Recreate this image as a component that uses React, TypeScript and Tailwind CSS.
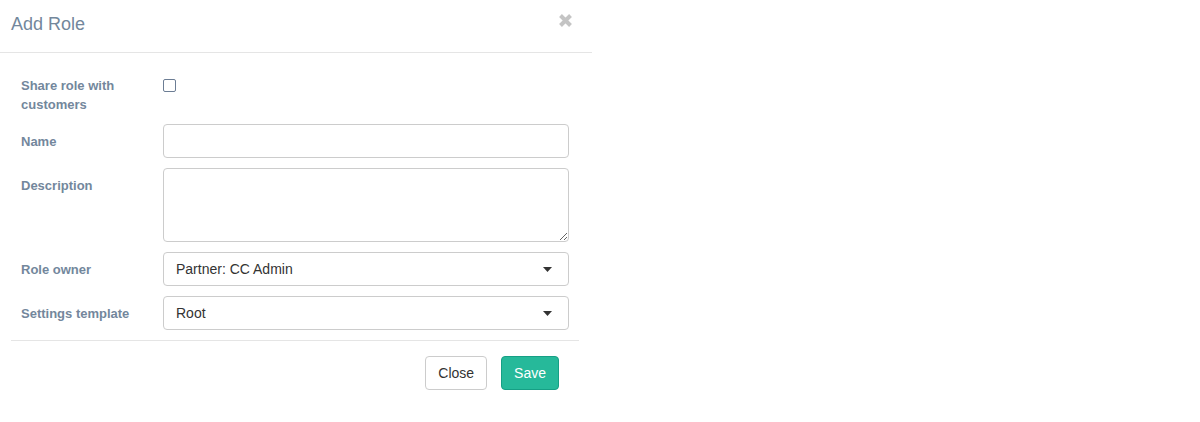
import React from "react";

const labelCls = "w-[152px] shrink-0 pl-[10px] pr-[10px] text-[13px] font-bold leading-[19px] text-[#73879C]";
const inputCls = "w-[406px] h-[34px] rounded-[4px] border border-[#ccc] bg-white";

function Caret() {
  return (
    <svg width="9" height="5" viewBox="0 0 9 5" className="shrink-0">
      <path d="M0 0 H9 L4.5 5 Z" fill="#333" />
    </svg>
  );
}

function SelectBox({ value }: { value: string }) {
  return (
    <div className={`${inputCls} flex items-center justify-between pl-[12px] pr-[16px] text-[14px] text-[#333]`}>
      <span>{value}</span>
      <Caret />
    </div>
  );
}

export default function App() {
  return (
    <div className="w-[1200px] h-[422px] bg-white font-['Liberation_Sans',Arial,sans-serif]">
      <div className="w-[592px]">
        {/* header */}
        <div className="h-[53px] border-b border-[#e5e5e5] flex items-start justify-between">
          <h4 className="pl-[11px] pt-[14px] text-[18px] leading-[20px] text-[#73879C]">Add Role</h4>
          <button className="mr-[19px] mt-[13px]" aria-label="close">
            <svg width="15" height="15" viewBox="0 0 15 15">
              <path d="M2.5 2.5 L12.5 12.5 M12.5 2.5 L2.5 12.5" stroke="#c4c4c4" strokeWidth="4" strokeLinecap="butt" />
            </svg>
          </button>
        </div>

        {/* body */}
        <div className="ml-[11px] w-[568px] pt-[23px]">
          <div className="flex mb-[10px]">
            <div className={`${labelCls} w-[152px]`}>
              Share role with
              <br />
              customers
            </div>
            <div className="pt-[3px]">
              <div className="w-[13px] h-[13px] rounded-[2px] border-[1.5px] border-[#6c7d94] bg-white" />
            </div>
          </div>

          <div className="flex mb-[10px]">
            <div className={`${labelCls} pt-[8px]`}>Name</div>
            <input className={`${inputCls} px-[12px] text-[14px] outline-none`} />
          </div>

          <div className="flex mb-[10px]">
            <div className={`${labelCls} pt-[8px]`}>Description</div>
            <textarea className="w-[406px] h-[74px] rounded-[4px] border border-[#ccc] bg-white px-[12px] py-[6px] text-[14px] outline-none" />
          </div>

          <div className="flex mb-[10px]">
            <div className={`${labelCls} pt-[8px]`}>Role owner</div>
            <SelectBox value="Partner: CC Admin" />
          </div>

          <div className="flex">
            <div className={`${labelCls} pt-[8px]`}>Settings template</div>
            <SelectBox value="Root" />
          </div>

          {/* footer */}
          <div className="mt-[10px] border-t border-[#e5e5e5] pt-[15px] pr-[20px] flex justify-end gap-[14px]">
            <button className="h-[34px] px-[12px] rounded-[4px] border border-[#ccc] bg-white text-[14px] text-[#333]">
              Close
            </button>
            <button className="h-[34px] px-[12px] rounded-[4px] border border-[#169F85] bg-[#26B99A] text-[14px] text-white">
              Save
            </button>
          </div>
        </div>
      </div>
    </div>
  );
}
